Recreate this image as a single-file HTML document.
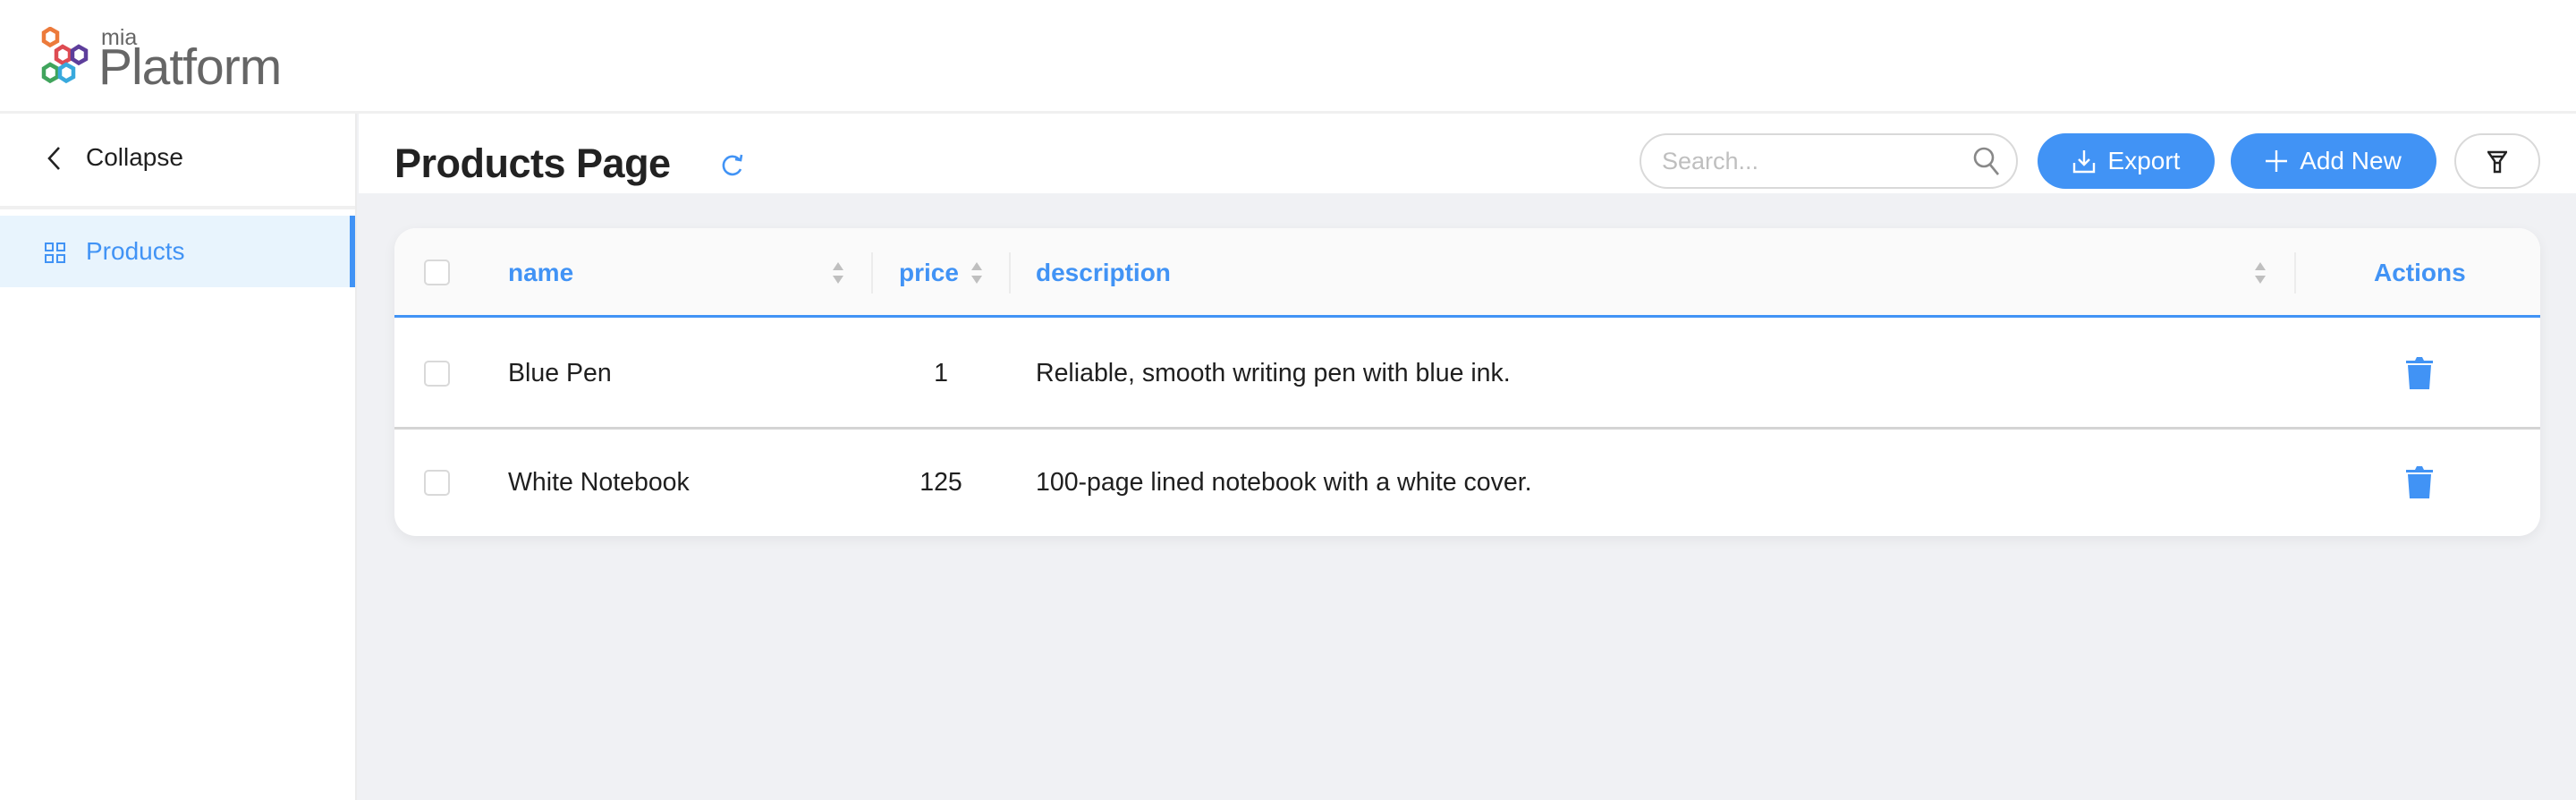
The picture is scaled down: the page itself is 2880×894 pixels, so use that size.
<!DOCTYPE html>
<html><head><meta charset="utf-8"><style>
*{box-sizing:border-box;margin:0;padding:0}
body{width:2880px;height:894px;overflow:hidden;background:#f0f1f4;font-family:"Liberation Sans",sans-serif;position:relative;color:#1f1f1f}
.abs{position:absolute}
.hdr{left:0;top:0;width:2880px;height:127px;background:#fff;border-bottom:3px solid #f0f0f0}
.side{left:0;top:127px;width:399px;height:767px;background:#fff;border-right:2px solid #ececec}
.topbar{left:401px;top:127px;width:2479px;height:89px;background:#fff}
.btn{top:149px;height:62px;border-radius:31px;background:#4193f5;color:#fff;font-size:28px;display:flex;align-items:center;justify-content:center;gap:14px}
.card{left:441px;top:255px;width:2399px;height:344px;background:#fff;border-radius:24px;box-shadow:0 4px 14px rgba(0,0,0,.06);overflow:hidden}
.th{left:0;top:0;width:2399px;height:100px;background:#fafafa;border-bottom:3px solid #4193f5}
.cb{width:29px;height:29px;border:2px solid #d9d9d9;border-radius:5px;background:#fff}
.h{color:#4193f5;font-weight:bold;font-size:28px}
.t{font-size:28.5px;color:#1f1f1f}
.sep{width:2px;height:46px;background:#ececec;top:27px}
.sort{width:14px}
</style></head><body>
<div class="abs hdr"></div>
<svg class="abs" style="left:46px;top:30px" width="58" height="66" viewBox="0 0 58 66">
<g fill="none" stroke-width="4.5">
<polygon points="10,2 18,6.5 18,16 10,20.5 3,16 3,6.5" stroke="#ec7a3b"/>
<polygon points="24,22 32,26.5 32,36 24,40.5 17,36 17,26.5" stroke="#de4b52"/>
<polygon points="42,22 50,26.5 50,36 42,40.5 35,36 35,26.5" stroke="#5d3e9b"/>
<polygon points="10,42 18,46.5 18,56 10,60.5 3,56 3,46.5" stroke="#40a45c"/>
<polygon points="28,42 36,46.5 36,56 28,60.5 21,56 21,46.5" stroke="#38a9dd"/>
</g></svg>
<div class="abs" style="left:113px;top:28px;font-size:25px;color:#666">mia</div>
<div class="abs" style="left:110px;top:42px;font-size:57px;color:#666;letter-spacing:-1px">Platform</div>

<div class="abs side">
<div class="abs" style="left:0;top:103px;width:397px;height:4px;background:#f0f0f0"></div>
<svg class="abs" style="left:52px;top:36px" width="16" height="28" viewBox="0 0 16 28"><path d="M14 2 L3 14 L14 26" fill="none" stroke="#222" stroke-width="2.6"/></svg>
<div class="abs" style="left:96px;top:33px;font-size:28px">Collapse</div>
<div class="abs" style="left:0;top:114px;width:397px;height:80px;background:#e8f4fd"></div>
<div class="abs" style="left:391px;top:114px;width:6px;height:80px;background:#4193f5"></div>
<svg class="abs" style="left:50px;top:144px" width="24" height="24" viewBox="0 0 24 24"><g fill="none" stroke="#4193f5" stroke-width="2"><rect x="1" y="1" width="8" height="8"/><rect x="14" y="1" width="8" height="8"/><rect x="1" y="14" width="8" height="8"/><rect x="14" y="14" width="8" height="8"/></g></svg>
<div class="abs" style="left:96px;top:138px;font-size:28px;color:#4193f5">Products</div>
</div>

<div class="abs topbar"></div>
<div class="abs" style="left:441px;top:157px;font-size:45px;font-weight:bold;color:#222;letter-spacing:-0.5px">Products Page</div>
<svg class="abs" style="left:806px;top:170px" width="26" height="28" viewBox="0 0 26 28"><path d="M21 9 A10 10 0 1 0 22 19" fill="none" stroke="#4193f5" stroke-width="2.6"/><path d="M16 8 L22 9 L23 3" fill="none" stroke="#4193f5" stroke-width="2.6"/></svg>

<div class="abs" style="left:1833px;top:149px;width:423px;height:62px;border:2px solid #d9d9d9;border-radius:31px;background:#fff"></div>
<div class="abs" style="left:1858px;top:165px;font-size:27px;color:#bfbfbf">Search...</div>
<svg class="abs" style="left:2205px;top:163px" width="32" height="34" viewBox="0 0 32 34"><circle cx="13" cy="13" r="10" fill="none" stroke="#888" stroke-width="2.6"/><path d="M20 21 L29 32" stroke="#888" stroke-width="2.6"/></svg>

<div class="abs btn" style="left:2278px;width:198px">
<svg width="26" height="28" viewBox="0 0 26 28"><path d="M13 2 V18 M7 12 L13 18 L19 12 M2 16 V26 H24 V16" fill="none" stroke="#fff" stroke-width="2.4"/></svg><span>Export</span></div>
<div class="abs btn" style="left:2494px;width:230px">
<svg width="24" height="24" viewBox="0 0 24 24"><path d="M12 0 V24 M0 12 H24" stroke="#fff" stroke-width="2.4"/></svg><span>Add New</span></div>
<div class="abs" style="left:2744px;top:149px;width:96px;height:62px;border:2px solid #d9d9d9;border-radius:31px;background:#fff"></div>
<svg class="abs" style="left:2781px;top:168px" width="22" height="26" viewBox="0 0 22 26"><path d="M1 2 H21 L14 12 V24 H8 V12 Z M4 7 H18 M8 14 H14" fill="none" stroke="#222" stroke-width="2.4"/></svg>

<div class="abs card">
<div class="abs th"></div>
<div class="abs cb" style="left:33px;top:35px"></div>
<div class="abs h" style="left:127px;top:34px">name</div>
<svg class="abs sort" style="left:489px;top:36px" height="28" viewBox="0 0 14 28"><path d="M7 2 L13 11 H1Z M7 26 L13 17 H1Z" fill="#bfbfbf"/></svg>
<div class="abs sep" style="left:533px"></div>
<div class="abs h" style="left:564px;top:34px">price</div>
<svg class="abs sort" style="left:644px;top:36px" height="28" viewBox="0 0 14 28"><path d="M7 2 L13 11 H1Z M7 26 L13 17 H1Z" fill="#bfbfbf"/></svg>
<div class="abs sep" style="left:687px"></div>
<div class="abs h" style="left:717px;top:34px">description</div>
<svg class="abs sort" style="left:2079px;top:36px" height="28" viewBox="0 0 14 28"><path d="M7 2 L13 11 H1Z M7 26 L13 17 H1Z" fill="#bfbfbf"/></svg>
<div class="abs sep" style="left:2124px"></div>
<div class="abs h" style="left:2213px;top:34px;width:100px;text-align:center">Actions</div>

<div class="abs cb" style="left:33px;top:148px"></div>
<div class="abs t" style="left:127px;top:146px">Blue Pen</div>
<div class="abs t" style="left:561px;top:146px;width:100px;text-align:center">1</div>
<div class="abs t" style="left:717px;top:146px">Reliable, smooth writing pen with blue ink.</div>
<svg class="abs" style="left:2248px;top:144px" width="32" height="36" viewBox="0 0 32 36"><path d="M1 4 H11 L13 0 H19 L21 4 H31 V7 H1Z M3 9 H29 L27 36 H5Z" fill="#4193f5"/></svg>
<div class="abs" style="left:0;top:222px;width:2399px;height:3px;background:#d4d4d4"></div>

<div class="abs cb" style="left:33px;top:270px"></div>
<div class="abs t" style="left:127px;top:268px">White Notebook</div>
<div class="abs t" style="left:561px;top:268px;width:100px;text-align:center">125</div>
<div class="abs t" style="left:717px;top:268px">100-page lined notebook with a white cover.</div>
<svg class="abs" style="left:2248px;top:266px" width="32" height="36" viewBox="0 0 32 36"><path d="M1 4 H11 L13 0 H19 L21 4 H31 V7 H1Z M3 9 H29 L27 36 H5Z" fill="#4193f5"/></svg>
</div>
</body></html>
